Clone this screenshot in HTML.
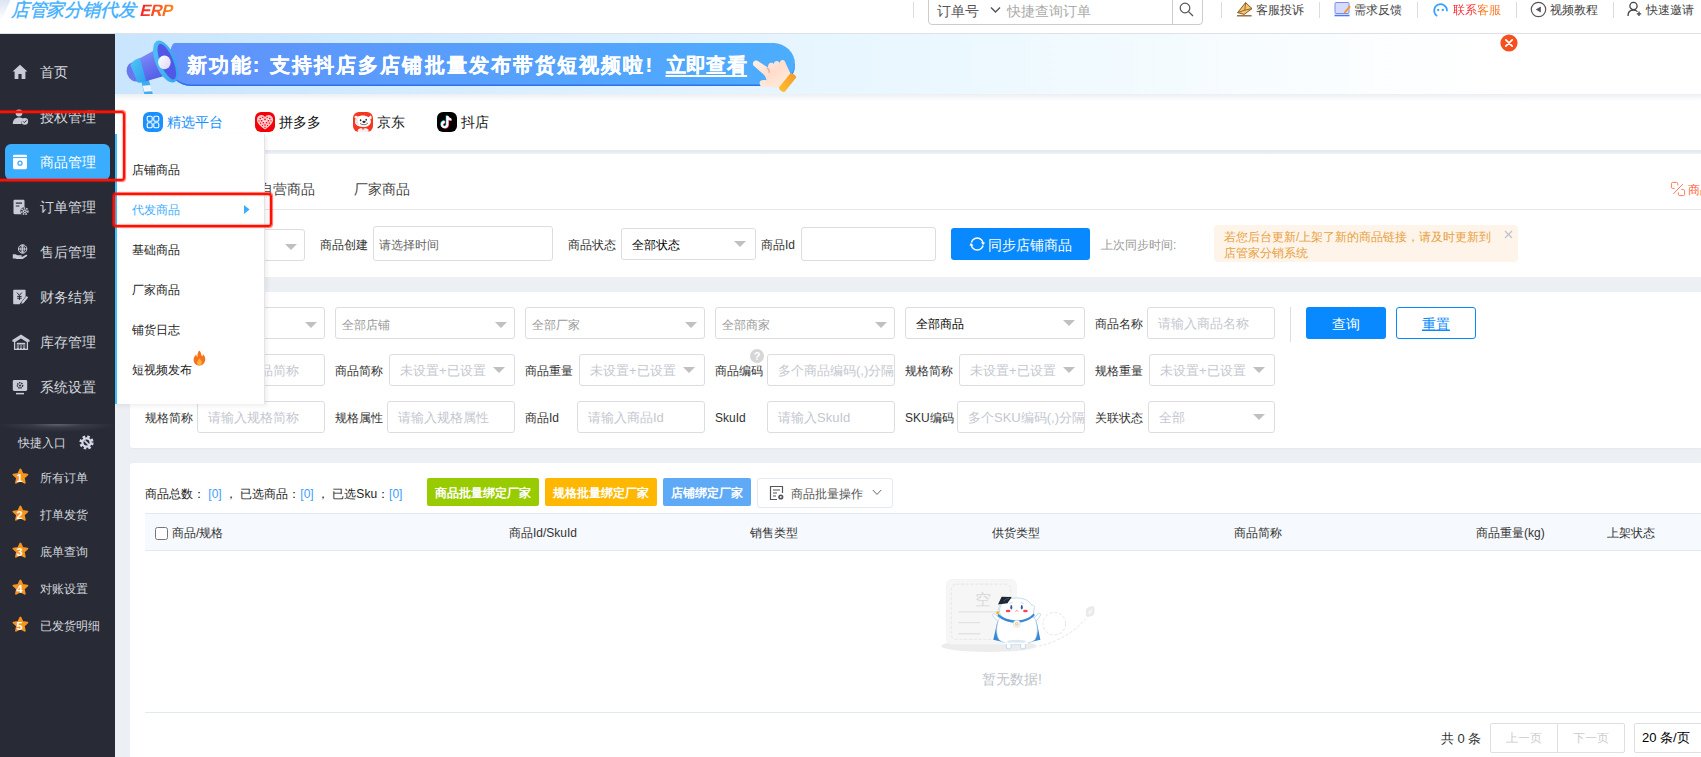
<!DOCTYPE html>
<html lang="zh">
<head>
<meta charset="utf-8">
<title>ERP</title>
<style>
*{box-sizing:border-box;margin:0;padding:0}
html,body{width:1701px;height:757px;overflow:hidden;background:#edf0f5;font-family:"Liberation Sans",sans-serif;font-size:12px;color:#333}
.abs{position:absolute}
#page{position:absolute;left:0;top:0;width:1701px;height:757px;overflow:hidden;background:#ecf0f5}
/* top bar */
#top{position:absolute;left:0;top:0;width:1701px;height:34px;background:#fff;border-bottom:1px solid #dee2e8}
#logo{position:absolute;left:8.5px;top:-3.5px;height:26px;line-height:26px;font-size:18.15px;color:#3daeff;font-weight:300;-webkit-text-stroke:.35px #45b1ff;transform:skewX(-14deg);transform-origin:left bottom;letter-spacing:-0.2px;white-space:nowrap}
#logo b{font-weight:700;font-size:16.5px;margin-left:4px;position:relative;top:0px;-webkit-text-stroke:0;background:linear-gradient(90deg,#f5222d,#fa8c16);-webkit-background-clip:text;background-clip:text;color:transparent;letter-spacing:-.6px}
.tsep{position:absolute;top:2px;width:1px;height:16px;background:#dcdcdc}
.tlink{position:absolute;top:0;height:20px;line-height:20px;font-size:12px;color:#444;white-space:nowrap}
.tico{position:absolute;top:1px}
#search{position:absolute;left:928px;top:-8px;width:275px;height:33px;border:1px solid #ccc;border-radius:4px;background:#fff}
#search .k{position:absolute;left:8px;top:8px;height:20px;line-height:20px;font-size:14px;color:#555}
#search .p{position:absolute;left:78px;top:8px;height:20px;line-height:20px;font-size:14px;color:#aaa}
#search .d{position:absolute;left:243px;top:0;width:1px;height:32px;background:#ccc}
/* sidebar */
#side{position:absolute;left:0;top:34px;width:115px;height:723px;background:#282b35}
.nav{position:absolute;left:0;width:115px;height:36px}
.nav span{position:absolute;left:40px;top:0;height:36px;line-height:36px;font-size:14px;color:#d5d7de;white-space:nowrap}
.nav svg{position:absolute;left:12px;top:10px}
.nav.act{left:5px;width:105px;background:#3aadff;border-radius:6px}
.nav.act span{left:35px;color:#fff}
.nav.act svg{left:7px}
.q{position:absolute;left:0;width:115px;height:24px}
.q span{position:absolute;left:40px;top:0;height:24px;line-height:24px;font-size:12px;color:#d5d7de;white-space:nowrap}
.q svg{position:absolute;left:11.8px;top:2.4px;width:16.8px;height:16.8px}
.q i{position:absolute;left:10.6px;top:2.6px;width:18px;height:18px;line-height:18px;text-align:center;font-style:normal;font-weight:bold;font-size:11px;color:#fff}
/* banner */
#banner{position:absolute;left:115px;top:34px;width:1586px;height:60px;background:linear-gradient(90deg,#c9e6fe 0,#cee9ff 11.7%,#dff1ff 30.6%,#e8f6ff 46%,#eef9ff 56.7%,#f7fcff 71.6%,#fdfeff 82%,#ffffff 88%)}
#pill{position:absolute;left:54px;top:9px;width:626px;height:43px;border-radius:6px 22px 22px 22px/22px 22px 22px 22px;background:linear-gradient(90deg,#6192fc 0,#579ffc 50%,#4cadfd 100%);box-shadow:inset 0 -1.5px 0 #2d72ea}
#pill .t{position:absolute;left:17.5px;top:1px;height:43px;line-height:43px;font-size:20px;font-weight:bold;color:#fff;letter-spacing:2.1px;white-space:nowrap;-webkit-text-stroke:.2px #fff}
#pill .t .m{margin-left:8.3px}
#pill .t u{text-underline-offset:3px;text-decoration-thickness:2px;margin-left:11.2px;letter-spacing:.4px}
#bshadow{position:absolute;left:115px;top:94px;width:1586px;height:7px;background:linear-gradient(180deg,rgba(200,208,220,.35),rgba(255,255,255,0))}
/* platform row */
#plat{position:absolute;left:115px;top:94px;width:1586px;height:56px;background:#fff}
.pf{position:absolute;top:17px;height:22px;line-height:22px;font-size:14px;color:#111;white-space:nowrap}
.pfi{position:absolute;top:18px;width:20px;height:20px;border-radius:6px;overflow:hidden}
#sep1{position:absolute;left:115px;top:150px;width:1586px;height:4px;background:linear-gradient(180deg,#e3e7ee,#eef1f5)}

/* main cards */
.card{position:absolute;background:#fff}
.lb{position:absolute;height:32px;line-height:32px;padding-top:1px;font-size:12px;color:#333;white-space:nowrap}
.ip{position:absolute;height:32px;border:1px solid #dcdde1;border-radius:3px;background:#fff;overflow:hidden;white-space:nowrap}
.ip span{position:absolute;left:10px;top:1px;height:30px;line-height:30px;font-size:13px;color:#c4c7cf;white-space:nowrap}
.ip.s6 span{left:6px;top:2px;font-size:12px;color:#999}
.ip.blk span{color:#000;font-size:12px}
.ip i{position:absolute;right:9px;top:12px;width:0;height:0;border-left:6px solid transparent;border-right:6px solid transparent;border-top:6px solid #c0c0c0}
.ip.s6 i{right:7px;top:14px}
.btn{position:absolute;height:32px;line-height:32px;padding-top:1px;text-align:center;font-size:14px;border-radius:3px;white-space:nowrap}
.cb{position:absolute;top:478px;height:28px;line-height:30px;border-radius:2px;color:#fff;font-size:12px;font-weight:bold;text-align:center;white-space:nowrap}
.th{position:absolute;top:513px;height:38px;line-height:40px;font-size:12px;color:#333;white-space:nowrap}

/* submenu */
#sub{position:absolute;left:115px;top:134px;width:150px;height:270px;background:#fff;border-left:2px solid #3cc0ff;border-right:1px solid #e4e4e4;box-shadow:2px 2px 4px rgba(0,0,0,.07)}
#sub div{position:absolute;left:15px;height:24px;line-height:24px;font-size:12px;color:#222;white-space:nowrap}
.red{position:absolute;border:2px solid #ff1000;border-radius:3.5px;box-shadow:0 0 1px .4px rgba(255,16,0,.6),inset 0 0 1px .4px rgba(255,16,0,.6)}
</style>
</head>
<body>
<div id="page">

<!-- ================= TOP BAR ================= -->
<div id="top">
  <div class="abs" style="left:-6px;top:0;width:12px;height:20px;transform:skewX(-24deg);background:linear-gradient(180deg,rgba(205,218,240,.7),rgba(235,240,250,0))"></div>
  <div id="logo">店管家分销代发<b>ERP</b></div>
  <div class="tsep" style="left:913px"></div>
  <div id="search">
    <span class="k">订单号</span>
    <svg class="abs" style="left:61px;top:13px" width="11" height="8" viewBox="0 0 11 8"><path d="M1 1.5 L5.5 6 L10 1.5" fill="none" stroke="#555" stroke-width="1.4"/></svg>
    <span class="p">快捷查询订单</span>
    <div class="d"></div>
    <svg class="abs" style="left:250px;top:9px" width="15" height="15" viewBox="0 0 15 15"><circle cx="6" cy="6" r="4.8" fill="none" stroke="#555" stroke-width="1.2"/><path d="M9.6 9.6 L14 14" stroke="#555" stroke-width="1.3"/></svg>
  </div>
  <div class="tsep" style="left:1221px"></div>
  <svg class="tico" style="left:1236px" width="18" height="16" viewBox="0 0 18 16"><path d="M1.6 11.6 L9.6 1.6 L16 7.6 L8.2 13.4 Z" fill="#f4c66d" stroke="#8a5a2b" stroke-width="1" stroke-linejoin="round"/><path d="M9.6 1.6 L8.8 9.2 L16 7.6 M8.8 9.2 L1.6 11.6" fill="none" stroke="#8a5a2b" stroke-width=".9"/><path d="M1 14.8 H15.6" stroke="#8a5a2b" stroke-width="1.3"/></svg>
  <div class="tlink" style="left:1256px">客服投诉</div>
  <div class="tsep" style="left:1319px"></div>
  <svg class="tico" style="left:1334px" width="17" height="16" viewBox="0 0 17 16"><rect x="1" y="1.5" width="14" height="11" rx="1" fill="#d6dcff" stroke="#7c8cf0" stroke-width="1"/><path d="M0.5 14.5 H15.5" stroke="#4a7cf0" stroke-width="1.6"/><path d="M9.6 12.6 L10.4 10.6 L15.4 4.6 L16.8 5.8 L11.8 11.8 Z" fill="#f59a23"/></svg>
  <div class="tlink" style="left:1354px">需求反馈</div>
  <div class="tsep" style="left:1417px"></div>
  <svg class="tico" style="left:1432px" width="17" height="16" viewBox="0 0 17 16"><path d="M4.6 14.6 A6.4 6.4 0 1 1 15 9.6" fill="none" stroke="#3aa0ff" stroke-width="1.7" stroke-linecap="round"/><circle cx="6.2" cy="9" r="1.15" fill="#3aa0ff"/><circle cx="10.8" cy="9" r="1.15" fill="#3aa0ff"/></svg>
  <div class="tlink" style="left:1453px;background:linear-gradient(90deg,#f5222d 0,#f5222d 35%,#fa8c16 70%,#fa6a3a 100%);-webkit-background-clip:text;background-clip:text;color:transparent">联系客服</div>
  <div class="tsep" style="left:1516px"></div>
  <svg class="tico" style="left:1530px" width="17" height="17" viewBox="0 0 17 17"><circle cx="8.5" cy="8.5" r="7.2" fill="none" stroke="#555" stroke-width="1.2"/><path d="M10.8 5.6 V11.4 L5.8 8.5 Z" fill="#555"/></svg>
  <div class="tlink" style="left:1550px">视频教程</div>
  <div class="tsep" style="left:1613px"></div>
  <svg class="tico" style="left:1627px" width="15" height="16" viewBox="0 0 15 16"><circle cx="6.5" cy="5" r="3.6" fill="none" stroke="#444" stroke-width="1.3"/><path d="M1 15 C1 10.5 4 9 6.5 9 C8 9 9.5 9.6 10.5 10.6" fill="none" stroke="#444" stroke-width="1.3"/><path d="M12 10.5 V15 M9.8 12.8 H14.2" stroke="#444" stroke-width="1.3"/></svg>
  <div class="tlink" style="left:1646px">快速邀请</div>
</div>

<!-- ================= BANNER ================= -->
<div id="banner">
  <div id="pill"><div class="t"><span>新功能:</span><span class="m">支持抖店多店铺批量发布带货短视频啦!</span><u>立即查看</u></div></div>
  <!-- megaphone -->
  <svg class="abs" style="left:8px;top:4px" width="60" height="56" viewBox="0 0 60 56">
    <defs>
      <linearGradient id="mg1" x1="0" y1="0" x2="0.4" y2="1"><stop offset="0" stop-color="#8a96fa"/><stop offset=".5" stop-color="#6a78f2"/><stop offset="1" stop-color="#5560e6"/></linearGradient>
      <linearGradient id="mg2" x1="0" y1="0" x2="1" y2="1"><stop offset="0" stop-color="#52c4f8"/><stop offset="1" stop-color="#2f9fec"/></linearGradient>
      <linearGradient id="mg3" x1="0" y1="0" x2="1" y2="1"><stop offset="0" stop-color="#ffffff"/><stop offset="1" stop-color="#dcd6fb"/></linearGradient>
    </defs>
    <!-- handle -->
    <path d="M18 42 L25.6 41 L29.8 56 L21.4 56 Z" fill="#3aaeee"/>
    <path d="M19.6 47.8 L27.4 47 L29.2 53.2 L21.2 53.8 Z" fill="#f3f4fb"/>
    <!-- back blob -->
    <ellipse cx="11.5" cy="34" rx="7.6" ry="9.8" transform="rotate(-20 11.5 34)" fill="#6a76ee"/>
    <!-- cone body -->
    <path d="M15.5 21 L31 12.5 L41 38 L22 43.5 Z" fill="url(#mg1)"/>
    <!-- cyan band -->
    <path d="M16.9 20 C12 21 8 24.5 7.6 27.5 L14.6 44.6 C18 45 21.6 44 23 42.6 Z" fill="url(#mg2)"/>
    <!-- rim -->
    <ellipse cx="42.6" cy="23.5" rx="10" ry="22.4" transform="rotate(-22.2 42.6 23.5)" fill="url(#mg2)"/>
    <ellipse cx="43.8" cy="23.8" rx="6.4" ry="19" transform="rotate(-22.2 43.6 23.6)" fill="#5257e8"/>
    <ellipse cx="41.4" cy="24.3" rx="6.3" ry="6.9" fill="url(#mg3)"/>
    <path d="M47.6 23 C49 27 49.6 32 51 38.6 L52.4 36.8 C52 31 50 26 47.6 23 Z" fill="#5257e8"/>
  </svg>
  <!-- hand -->
  <svg class="abs" style="left:634px;top:22px" width="50" height="38" viewBox="0 0 50 38">
    <defs>
      <linearGradient id="hg1" x1="0" y1="0" x2="1" y2="1"><stop offset="0" stop-color="#fff1e8"/><stop offset=".5" stop-color="#ffddcc"/><stop offset="1" stop-color="#fff0e0"/></linearGradient>
      <linearGradient id="hg2" x1="0" y1="1" x2="1" y2="0"><stop offset="0" stop-color="#fcc22c"/><stop offset="1" stop-color="#f7982a"/></linearGradient>
    </defs>
    <!-- thumb -->
    <path d="M10.6 27.4 C10.4 25 12.4 23.8 15 24 L24 24.6 L24 31 L14.6 30.8 C12.4 30.8 10.8 29.6 10.6 27.4 Z" fill="#ffe6d6"/>
    <!-- hand -->
    <path d="M4.4 9.4 C2.6 6.4 5.6 3.4 8.4 4.8 L19 11.4 C19 9.6 19.6 7.4 21.4 6.8 C22.8 6.4 24 7 24.6 8 C25 6.2 26.2 5 27.8 5 C29.4 5 30.4 6 30.8 7.2 C31.2 5 32.4 3.8 33.8 4 C35.4 4.2 36.2 5.6 36.6 7 L41.6 18 L30.4 32 C26 32.4 20.6 31 18.6 27 C17.4 24.4 17 21 15.6 19.4 Z" fill="url(#hg1)"/>
    <path d="M18.4 12.4 C19.6 13 20.6 14.4 20.2 16.2" fill="none" stroke="#f59a8c" stroke-width="1.6" stroke-linecap="round" opacity=".75"/>
    <!-- cuff -->
    <path d="M30 31.6 L41.2 17.6 C44 17.4 47 19.4 47.2 21.4 L35.8 35.8 C33 36.4 30.2 34.4 30 31.6 Z" fill="url(#hg2)"/>
  </svg>
  <!-- close -->
  <svg class="abs" style="left:1385px;top:0px" width="18" height="18" viewBox="0 0 18 18"><circle cx="9" cy="9" r="8.6" fill="#f4511e"/><path d="M5.8 5.8 L12.2 12.2 M12.2 5.8 L5.8 12.2" stroke="#fff" stroke-width="1.7" stroke-linecap="round"/></svg>
</div>

<!-- ================= PLATFORM ROW ================= -->
<div id="plat">
  <div class="pfi" style="left:28px;background:#1890ff">
    <svg width="20" height="20" viewBox="0 0 20 20"><rect x="4.2" y="4.2" width="5" height="5" rx="1.3" fill="none" stroke="#fff" stroke-width="1.1"/><rect x="10.8" y="4.2" width="5" height="5" rx="1.3" fill="none" stroke="#fff" stroke-width="1.1"/><rect x="4.2" y="10.8" width="5" height="5" rx="1.3" fill="none" stroke="#fff" stroke-width="1.1"/><rect x="10.8" y="10.8" width="5" height="5" rx="1.3" fill="none" stroke="#fff" stroke-width="1.1"/></svg>
  </div>
  <div class="pf" style="left:52px;color:#1890ff">精选平台</div>
  <div class="pfi" style="left:140px;background:#f40009">
    <svg width="20" height="20" viewBox="0 0 20 20"><path d="M10 17.4 C5 14 1.8 11 1.9 7.4 C2 4.4 4.4 2.8 6.6 2.9 C8 3 9.2 3.7 10 4.9 C10.8 3.7 12 3 13.4 2.9 C15.6 2.8 18 4.4 18.1 7.4 C18.2 11 15 14 10 17.4 Z" fill="#fbc4c7"/><g fill="#f40009"><circle cx="5.2" cy="6.4" r=".75"/><circle cx="7.8" cy="5.4" r=".6"/><circle cx="12.2" cy="5.4" r=".6"/><circle cx="14.8" cy="6.4" r=".75"/><circle cx="10" cy="7.4" r=".8"/><circle cx="4" cy="8.8" r=".6"/><circle cx="6.6" cy="8.8" r=".8"/><circle cx="13.4" cy="8.8" r=".8"/><circle cx="16" cy="8.8" r=".6"/><circle cx="8.4" cy="10.8" r=".8"/><circle cx="11.6" cy="10.8" r=".8"/><circle cx="5.6" cy="11.2" r=".6"/><circle cx="14.4" cy="11.2" r=".6"/><circle cx="10" cy="13" r=".8"/><circle cx="7.4" cy="13.4" r=".55"/><circle cx="12.6" cy="13.4" r=".55"/><circle cx="10" cy="15.4" r=".55"/></g><g fill="#fff"><circle cx="6.4" cy="7.4" r=".5"/><circle cx="13.6" cy="7.4" r=".5"/><circle cx="10" cy="9.6" r=".55"/><circle cx="8" cy="12.4" r=".45"/><circle cx="12" cy="12.4" r=".45"/><circle cx="3.4" cy="7.2" r=".45"/><circle cx="16.6" cy="7.2" r=".45"/><circle cx="10" cy="5.8" r=".4"/></g></svg>
  </div>
  <div class="pf" style="left:164px">拼多多</div>
  <div class="pfi" style="left:238px;background:#f6361f">
    <svg width="20" height="20" viewBox="0 0 20 20"><path d="M1.4 5.2 C1.6 3.6 3.4 3.2 4.8 4.4 L3.4 7.2 Z" fill="#f4f4f4"/><path d="M17.4 3.6 C18.8 4 19 6 18 7.6 L15.4 5.4 Z" fill="#fff"/><path d="M2 9.6 C2 5.6 5.6 3.6 9.8 3.6 C14.2 3.6 17.6 5.8 17.8 9.2 C18 12.8 14.6 15 10 15 C5.2 15 2 13 2 9.6 Z" fill="#fff"/><path d="M2 9.6 C2 7.4 3.2 5.6 5 4.6 C4.2 7 4.4 11 6.4 14.2 C3.6 13.4 2 11.8 2 9.6 Z" fill="#e4e4e4"/><ellipse cx="7.6" cy="8.2" rx=".8" ry="1" fill="#222"/><ellipse cx="13.2" cy="7.8" rx=".8" ry="1" fill="#222"/><ellipse cx="11" cy="9.8" rx="1.7" ry="1.1" fill="#222"/><path d="M7 11.2 C9 13.4 13 13.2 15 10.8" fill="none" stroke="#333" stroke-width=".7"/><path d="M5 17.4 C8 15.6 12.6 15.6 15.4 17.4 L15.8 20 L4.6 20 Z" fill="#f1f1f1"/><path d="M8.4 16.2 L11.8 16.2 L11 17.6 L9.2 17.6 Z" fill="#f6361f"/></svg>
  </div>
  <div class="pf" style="left:262px">京东</div>
  <div class="pfi" style="left:322px;background:#000">
    <svg width="20" height="20" viewBox="0 0 20 20"><g fill="none" stroke-width="2.1" stroke-linecap="butt"><path d="M10.4 4 V12.6 A2.7 2.7 0 1 1 7.8 9.9 M10.4 4.2 C10.8 6.3 12.3 7.4 14.3 7.5" stroke="#25f4ee" transform="translate(-.6,-.5)"/><path d="M10.4 4 V12.6 A2.7 2.7 0 1 1 7.8 9.9 M10.4 4.2 C10.8 6.3 12.3 7.4 14.3 7.5" stroke="#fe2c55" transform="translate(.6,.5)"/><path d="M10.4 4 V12.6 A2.7 2.7 0 1 1 7.8 9.9 M10.4 4.2 C10.8 6.3 12.3 7.4 14.3 7.5" stroke="#fff"/></g></svg>
  </div>
  <div class="pf" style="left:346px">抖店</div>
</div>
<div id="bshadow"></div>
<div id="sep1"></div>


<!-- ================= CARD 1 : tabs + sync row ================= -->
<div class="card" style="left:130px;top:154px;width:1571px;height:123px"></div>
<div class="abs" style="left:130px;top:209px;width:1571px;height:1px;background:#e6e8eb"></div>
<div class="abs" style="left:259px;top:178px;height:22px;line-height:22px;font-size:14px;color:#444">自营商品</div>
<div class="abs" style="left:354px;top:178px;height:22px;line-height:22px;font-size:14px;color:#444">厂家商品</div>
<svg class="abs" style="left:1670px;top:181px" width="16" height="16" viewBox="0 0 16 16"><g fill="none" stroke="#ff7a5c" stroke-width="1"><path d="M4.6 7.4 H2.6 C1.9 7.4 1.4 6.9 1.4 6.2 V2.6 C1.4 1.9 1.9 1.4 2.6 1.4 H6.6 C7.3 1.4 7.8 1.9 7.8 2.6 V4.4"/><path d="M11.4 8.6 H13.4 C14.1 8.6 14.6 9.1 14.6 9.8 V13.4 C14.6 14.1 14.1 14.6 13.4 14.6 H9.6 C8.9 14.6 8.4 14.1 8.4 13.4 V11.4"/><path d="M12.8 3.2 L3.4 12.8"/></g></svg>
<div class="abs" style="left:1688px;top:179px;height:22px;line-height:22px;font-size:12px;color:#ff5f3c;white-space:nowrap">商品</div>

<div class="ip" style="left:145px;top:229px;width:160px"><i style="right:7px;top:14px"></i></div>
<div class="lb" style="left:320px;top:228px">商品创建</div>
<div class="ip s6" style="left:373px;top:226px;width:180px;height:35px"><span style="color:#666;height:33px;line-height:33px;left:5px;top:2px">请选择时间</span></div>
<div class="lb" style="left:568px;top:228px">商品状态</div>
<div class="ip blk" style="left:621px;top:228px;width:135px"><span>全部状态</span><i></i></div>
<div class="lb" style="left:761px;top:228px">商品Id</div>
<div class="ip" style="left:801px;top:227px;width:135px;height:34px"></div>
<div class="btn" style="left:951px;top:228px;width:139px;background:#0889ff;color:#fff;text-align:left;padding-left:37px">同步店铺商品
  <svg class="abs" style="left:18px;top:8px" width="16" height="16" viewBox="0 0 16 16"><circle cx="8.2" cy="8" r="6" fill="none" stroke="#fff" stroke-width="1.5"/><path d="M12 6.2 L16 6.4 L14.2 9.6 Z M4.4 9.8 L.4 9.6 L2.2 6.4 Z" fill="#fff"/><path d="M13.2 8.8 L15.2 9.2 M3.2 7.2 L1.2 6.8" stroke="#0889ff" stroke-width="1"/></svg>
</div>
<div class="lb" style="left:1101px;top:228px;color:#999">上次同步时间:</div>
<div class="abs" style="left:1214px;top:225px;width:304px;height:37px;background:#fef4ea;border-radius:4px"></div>
<div class="abs" style="left:1224px;top:229px;width:280px;line-height:16px;font-size:12px;color:#e8a03c">若您后台更新/上架了新的商品链接，请及时更新到<br>店管家分销系统</div>
<svg class="abs" style="left:1504px;top:230px" width="9" height="9" viewBox="0 0 9 9"><path d="M1 1 L8 8 M8 1 L1 8" stroke="#bcc0c8" stroke-width="1.1"/></svg>

<!-- ================= CARD 2 : filters ================= -->
<div class="card" style="left:130px;top:292px;width:1571px;height:156px;border-radius:3px 0 0 3px;box-shadow:0 1px 2px rgba(0,0,0,.035)"></div>
<!-- row 2 -->
<div class="ip s6" style="left:145px;top:307px;width:180px"><span>全部平台</span><i></i></div>
<div class="ip s6" style="left:335px;top:307px;width:180px"><span>全部店铺</span><i></i></div>
<div class="ip s6" style="left:525px;top:307px;width:180px"><span>全部厂家</span><i></i></div>
<div class="ip s6" style="left:715px;top:307px;width:180px"><span>全部商家</span><i></i></div>
<div class="ip blk" style="left:905px;top:307px;width:180px"><span>全部商品</span><i></i></div>
<div class="lb" style="left:1095px;top:307px">商品名称</div>
<div class="ip" style="left:1147px;top:307px;width:128px"><span>请输入商品名称</span></div>
<div class="abs" style="left:1290px;top:307px;width:1px;height:35px;background:#dcdfe6"></div>
<div class="btn" style="left:1306px;top:307px;width:80px;background:#0889ff;color:#fff">查询</div>
<div class="btn" style="left:1396px;top:307px;width:80px;background:#fff;color:#0889ff;border:1px solid #0889ff;line-height:30px;text-decoration:underline">重置</div>
<!-- row 3 -->
<div class="lb" style="left:145px;top:354px">商品简称</div>
<div class="ip" style="left:197px;top:354px;width:128px"><span>请输入商品简称</span></div>
<div class="lb" style="left:335px;top:354px">商品简称</div>
<div class="ip" style="left:389px;top:354px;width:126px"><span>未设置+已设置</span><i></i></div>
<div class="lb" style="left:525px;top:354px">商品重量</div>
<div class="ip" style="left:579px;top:354px;width:126px"><span>未设置+已设置</span><i></i></div>
<div class="lb" style="left:715px;top:354px">商品编码</div>
<div class="abs" style="left:750px;top:349px;width:14px;height:14px;border-radius:7px;background:#d6d6d6;color:#fff;font-size:11px;line-height:14px;text-align:center;font-weight:bold">?</div>
<div class="ip" style="left:767px;top:354px;width:128px"><span>多个商品编码(,)分隔</span></div>
<div class="lb" style="left:905px;top:354px">规格简称</div>
<div class="ip" style="left:959px;top:354px;width:126px"><span>未设置+已设置</span><i></i></div>
<div class="lb" style="left:1095px;top:354px">规格重量</div>
<div class="ip" style="left:1149px;top:354px;width:126px"><span>未设置+已设置</span><i></i></div>
<!-- row 4 -->
<div class="lb" style="left:145px;top:401px">规格简称</div>
<div class="ip" style="left:197px;top:401px;width:128px"><span>请输入规格简称</span></div>
<div class="lb" style="left:335px;top:401px">规格属性</div>
<div class="ip" style="left:387px;top:401px;width:128px"><span>请输入规格属性</span></div>
<div class="lb" style="left:525px;top:401px">商品Id</div>
<div class="ip" style="left:577px;top:401px;width:128px"><span>请输入商品Id</span></div>
<div class="lb" style="left:715px;top:401px">SkuId</div>
<div class="ip" style="left:767px;top:401px;width:128px"><span>请输入SkuId</span></div>
<div class="lb" style="left:905px;top:401px">SKU编码</div>
<div class="ip" style="left:957px;top:401px;width:128px"><span>多个SKU编码(,)分隔</span></div>
<div class="lb" style="left:1095px;top:401px">关联状态</div>
<div class="ip" style="left:1148px;top:401px;width:127px"><span>全部</span><i></i></div>

<!-- ================= CARD 3 : table ================= -->
<div class="card" style="left:130px;top:463px;width:1571px;height:300px;border-radius:3px 0 0 0"></div>
<div class="abs" style="left:145px;top:482px;height:24px;line-height:24px;font-size:12px;color:#222;white-space:nowrap">商品总数：&nbsp;<span style="color:#409eff">[0]</span>&nbsp;，&nbsp;已选商品：<span style="color:#409eff">[0]</span>&nbsp;，&nbsp;已选Sku：<span style="color:#409eff">[0]</span></div>
<div class="cb" style="left:427px;width:112px;background:#99cc00">商品批量绑定厂家</div>
<div class="cb" style="left:545px;width:112px;background:#ffb700">规格批量绑定厂家</div>
<div class="cb" style="left:663px;width:88px;background:#5eaaf7">店铺绑定厂家</div>
<div class="abs" style="left:757px;top:478px;width:136px;height:30px;border:1px solid #e3e8f1;border-radius:3px;background:#fff"></div>
<svg class="abs" style="left:769px;top:485px" width="16" height="16" viewBox="0 0 16 16"><g fill="none" stroke="#555" stroke-width="1.2"><path d="M8 14.5 H1.5 V1.5 H13.5 V8"/><path d="M4 5 H11 M4 8 H8 M4 11 H7"/></g><circle cx="11.8" cy="12" r="2.6" fill="#555"/><circle cx="11.8" cy="12" r="0.9" fill="#fff"/></svg>
<div class="abs" style="left:791px;top:478px;height:30px;line-height:32px;font-size:12px;color:#555;white-space:nowrap">商品批量操作</div>
<svg class="abs" style="left:872px;top:489px" width="10" height="7" viewBox="0 0 10 7"><path d="M0.8 1 L5 5.4 L9.2 1" fill="none" stroke="#666" stroke-width="1"/></svg>

<div class="abs" style="left:145px;top:513px;width:1556px;height:38px;background:#f6f9fd;border-top:1px solid #e3e9f1;border-bottom:1px solid #e3e9f1"></div>
<div class="abs" style="left:155px;top:527px;width:13px;height:13px;border:1px solid #767676;border-radius:2.5px;background:#fff"></div>
<div class="th" style="left:172px">商品/规格</div>
<div class="th" style="left:509px">商品Id/SkuId</div>
<div class="th" style="left:750px">销售类型</div>
<div class="th" style="left:992px">供货类型</div>
<div class="th" style="left:1234px">商品简称</div>
<div class="th" style="left:1476px">商品重量(kg)</div>
<div class="th" style="left:1607px">上架状态</div>

<!-- empty state -->
<svg class="abs" style="left:936px;top:572px" width="170" height="90" viewBox="0 0 170 90">
  <ellipse cx="53" cy="74" rx="48" ry="6" fill="#ececec"/>
  <rect x="10.3" y="7.5" width="70" height="65" rx="5.5" fill="#f6f6f6" stroke="#f0f0f0" stroke-width=".6"/>
  <rect x="15.2" y="12.2" width="59.6" height="55.2" rx="5" fill="none" stroke="#dcdcdc" stroke-width=".6" stroke-dasharray="3 1.8"/>
  <text x="47.2" y="32.6" font-size="16" fill="#d9d9d9" text-anchor="middle" font-family="Liberation Sans, sans-serif">空</text>
  <path d="M22.2 39.9 H66 M22.2 50.6 H44.2 M22.2 61.7 H44.2" stroke="#e3e3e3" stroke-width="1.4"/>
  <!-- cape -->
  <path d="M61.5 49 L57.3 67.8 L67 70 Z" fill="#3689d2"/>
  <path d="M100.5 49 L104.4 67.8 L95 70 Z" fill="#3689d2"/>
  <!-- arms -->
  <path d="M66.5 52 C62 50 58.5 46.5 56.6 43.2 C56.2 41.6 58.6 41.2 59.4 42.6 C61.4 45 64.5 46.4 67.5 47 Z" fill="#fff" stroke="#a9cbe8" stroke-width=".7"/>
  <path d="M95.5 52 C100 50 103 46.5 104.6 42.8 C105 41.2 102.6 40.8 101.8 42.2 C100 44.8 97 46.2 94.5 47 Z" fill="#fff" stroke="#a9cbe8" stroke-width=".7"/>
  <!-- body -->
  <path d="M64 45 C60 52 59.5 62 63 67.5 C67 73.5 95 73.5 99 67.5 C102.5 62 102 52 98 45 Z" fill="#fff" stroke="#a9cbe8" stroke-width=".7"/>
  <ellipse cx="80.5" cy="69.6" rx="9.5" ry="1.9" fill="#dbe8f3"/>
  <!-- feet -->
  <ellipse cx="72.7" cy="74" rx="2.6" ry="3" fill="#fff" stroke="#a9cbe8" stroke-width=".7"/>
  <ellipse cx="87" cy="74" rx="2.6" ry="3" fill="#fff" stroke="#a9cbe8" stroke-width=".7"/>
  <path d="M68 70.6 H92 V72 H68 Z" fill="#fff"/>
  <!-- head -->
  <path d="M63.6 40 C63 31 70 26 80.5 26 C88 26 93 28.5 95.5 33 C96.5 32.6 97.6 33.4 98.6 34.6 C98.2 36.2 98 37.6 97.8 40 C97.6 45 90 48.6 80.8 48.6 C71 48.6 64 45 63.6 40 Z" fill="#fff" stroke="#a9cbe8" stroke-width=".7"/>
  <!-- scarf -->
  <path d="M62 41.6 C67 46.4 74 48.6 81 48.4 C88 48.2 94 45.8 98 41.2 L98.6 43.6 C94 48.4 88 50.6 81 50.8 C73 51 66.5 48.6 61.6 44 Z" fill="#3689d2"/>
  <!-- face -->
  <ellipse cx="75.3" cy="35.2" rx="1" ry="2.2" fill="#2b5d9b"/><ellipse cx="85.8" cy="35.2" rx="1" ry="2.2" fill="#2b5d9b"/>
  <path d="M73.4 31.6 L76.4 30.4 M84.8 30.4 L87.8 31.6" stroke="#9bbfe0" stroke-width=".6"/>
  <ellipse cx="72.1" cy="39" rx="2.4" ry="1.3" fill="#ff4058"/><ellipse cx="89.4" cy="39" rx="2.4" ry="1.3" fill="#ff4058"/>
  <path d="M79.4 39.8 L80.8 38 L82.2 39.8" fill="none" stroke="#ff6b81" stroke-width=".7"/>
  <!-- hat -->
  <path d="M65.6 24.8 L75.7 25.1 L71.5 31.3 L62 32.5 Z" fill="#1f2733"/>
  <path d="M67.5 29.5 C69 27.5 71 26.6 73 26.6" fill="none" stroke="#3d6d9e" stroke-width=".7"/>
  <path d="M63.8 32.6 L61.6 40" stroke="#cfe0ef" stroke-width="1"/><rect x="60.4" y="39.4" width="2.4" height="2.6" fill="#f5b800" transform="rotate(15 61.6 40.7)"/>
  <!-- medal -->
  <circle cx="80.8" cy="51.8" r="3.5" fill="#fff" stroke="#b9d3ea" stroke-width=".6"/><circle cx="80.8" cy="51.8" r="1.9" fill="#fbc27a"/><circle cx="80.8" cy="51.8" r=".8" fill="#fff"/>
  <!-- deco -->
  <circle cx="118.3" cy="51.7" r="11.3" fill="none" stroke="#dedede" stroke-width=".8" stroke-dasharray="3 1.8"/>
  <path d="M103 74 C118 71 137 62 149.4 46.8" fill="none" stroke="#dedede" stroke-width=".8" stroke-dasharray="3 1.8"/>
  <path d="M150.6 37.6 C151.5 35.8 155 34.4 157.6 34.6 C158.6 36.6 158.2 41 157 42.8 C155 44.2 152 44.6 150.4 44 Z" fill="#ebebeb" stroke="#e0e0e0" stroke-width=".6"/>
  <path d="M152.4 40.2 L156.2 38.4 M153.2 42.2 L154.6 39.2" stroke="#fff" stroke-width=".9"/>
</svg>
<div class="abs" style="left:982px;top:668px;height:22px;line-height:22px;font-size:14px;color:#c0c4cc;white-space:nowrap">暂无数据!</div>
<div class="abs" style="left:145px;top:712px;width:1556px;height:1px;background:#e3e9f1"></div>

<!-- pagination -->
<div class="abs" style="left:1441px;top:724px;height:30px;line-height:30px;font-size:13px;color:#333;white-space:nowrap">共 0 条</div>
<div class="abs" style="left:1490px;top:723px;width:135px;height:30px;border:1px solid #dfdfdf;border-radius:2px;background:#fff"></div>
<div class="abs" style="left:1557px;top:723px;width:1px;height:30px;background:#dfdfdf"></div>
<div class="abs" style="left:1490px;top:723px;width:68px;height:30px;line-height:30px;text-align:center;font-size:12px;color:#ccc">上一页</div>
<div class="abs" style="left:1557px;top:723px;width:68px;height:30px;line-height:30px;text-align:center;font-size:12px;color:#ccc">下一页</div>
<div class="abs" style="left:1634px;top:723px;width:80px;height:30px;border:1px solid #dfdfdf;border-radius:2px;background:#fff"></div>
<div class="abs" style="left:1642px;top:723px;height:30px;line-height:30px;font-size:13px;color:#000;white-space:nowrap">20 条/页</div>




<!-- ================= SIDEBAR ================= -->
<div id="side">
  <div class="nav" style="top:20px"><svg width="16" height="16" viewBox="0 0 16 16"><path d="M8 0.8 L15.4 7.6 H13.4 V15 H9.6 V10 H6.4 V15 H2.6 V7.6 H0.6 Z" fill="#c9ccd6"/></svg><span>首页</span></div>
  <div class="nav" style="top:65px"><svg width="17" height="16" viewBox="0 0 17 16"><circle cx="7" cy="4" r="3.4" fill="#c9ccd6"/><path d="M0.8 15 C0.8 10.5 3.5 8.4 7 8.4 C9 8.4 10.6 9 11.6 10.2 C9.6 11 9 13 9.6 15 Z" fill="#c9ccd6"/><circle cx="12.8" cy="12.4" r="3.3" fill="#c9ccd6"/><path d="M11.2 12.4 L12.4 13.6 L14.4 11.4" fill="none" stroke="#282a36" stroke-width="1"/></svg><span>授权管理</span></div>
  <div class="nav act" style="top:110px"><svg width="16" height="16" viewBox="0 0 16 16"><path d="M1 2.2 C1 1.4 1.6 .8 2.4 .8 H13.6 C14.4 .8 15 1.4 15 2.2 V13.8 C15 14.6 14.4 15.2 13.6 15.2 H2.4 C1.6 15.2 1 14.6 1 13.8 Z" fill="#fff"/><path d="M1 3.6 H15" stroke="#3daeff" stroke-width="1"/><circle cx="8" cy="9.2" r="2" fill="none" stroke="#3daeff" stroke-width="1.3"/></svg><span>商品管理</span></div>
  <div class="nav" style="top:155px"><svg width="17" height="16" viewBox="0 0 17 16"><path d="M1.5 2 C1.5 1.3 2 .8 2.7 .8 H11.3 C12 .8 12.5 1.3 12.5 2 V8.2 C10 8.2 8.4 10 8.4 12 C8.4 13.3 9 14.4 9.8 15.2 H2.7 C2 15.2 1.5 14.7 1.5 14 Z" fill="#c9ccd6"/><path d="M3.8 4.2 H10 M3.8 7 H7.4" stroke="#282a36" stroke-width="1.2"/><circle cx="12.8" cy="12.2" r="3.1" fill="none" stroke="#c9ccd6" stroke-width="1.5" stroke-dasharray="1.6 1"/><circle cx="12.8" cy="12.2" r="1.9" fill="#c9ccd6"/><circle cx="12.8" cy="12.2" r=".8" fill="#282a36"/></svg><span>订单管理</span></div>
  <div class="nav" style="top:200px"><svg width="17" height="16" viewBox="0 0 17 16"><g fill="none" stroke="#c9ccd6" stroke-width="1"><circle cx="10.6" cy="5" r="4.2"/><path d="M6.4 5 H14.8 M10.6 .8 V9.2 M10.6 .8 C8.2 3 8.2 7 10.6 9.2 M10.6 .8 C13 3 13 7 10.6 9.2"/></g><path d="M.8 10.2 H3.4 L5.6 11.2 H9 C10 11.2 10 12.6 9 12.6 H6.6 L10.4 12.8 L14 10.8 C15 10.4 15.8 11.6 14.8 12.2 L10.6 15 H4.6 L3.4 14.4 H.8 Z" fill="#c9ccd6"/></svg><span>售后管理</span></div>
  <div class="nav" style="top:245px"><svg width="17" height="16" viewBox="0 0 17 16"><path d="M1.2 1.8 C1.2 1.2 1.7 .8 2.2 .8 H12.6 C13.2 .8 13.6 1.2 13.6 1.8 V7.4 L8 14.4 L7.8 15.2 H2.2 C1.7 15.2 1.2 14.8 1.2 14.2 Z" fill="#c9ccd6"/><path d="M5 3.6 L7.4 6.4 L9.8 3.6 M7.4 6.4 V11 M5.2 7.4 H9.6 M5.2 9.2 H9.6" fill="none" stroke="#282a36" stroke-width="1"/><path d="M9.4 15 L10 12.6 L14.6 7 L16.2 8.4 L11.6 14 Z" fill="#c9ccd6"/></svg><span>财务结算</span></div>
  <div class="nav" style="top:290px"><svg width="18" height="16" viewBox="0 0 18 16"><path d="M9 .4 L17.6 6 V7.8 H16 L9 3.2 L2 7.8 H.4 V6 Z" fill="#c9ccd6"/><path d="M2.6 7.6 L9 3.6 L15.4 7.6 V15.4 H2.6 Z" fill="none" stroke="#c9ccd6" stroke-width="1.3"/><path d="M4.8 15 V8.8 H13.2 V15 Z" fill="#c9ccd6"/><path d="M4.8 11 H13.2 M4.8 13 H13.2 M7.6 11 V15 M10.4 11 V15" stroke="#282a36" stroke-width=".9"/></svg><span>库存管理</span></div>
  <div class="nav" style="top:335px"><svg width="16" height="16" viewBox="0 0 16 16"><rect x=".8" y="1" width="14.4" height="11" rx="1.4" fill="#c9ccd6"/><circle cx="8" cy="6.4" r="2.6" fill="none" stroke="#282a36" stroke-width="1.4" stroke-dasharray="1.4 .8"/><circle cx="8" cy="6.4" r="1" fill="#282a36"/><path d="M4 14.6 H12" stroke="#c9ccd6" stroke-width="1.5"/></svg><span>系统设置</span></div>

  <div class="abs" style="left:0;top:390px;width:115px;height:8px;background:radial-gradient(ellipse 52% 100% at 50% 0,rgba(140,144,160,.55) 0,rgba(95,99,115,.3) 45%,rgba(40,42,54,0) 100%)"></div>
  <div class="abs" style="left:18px;top:397px;height:24px;line-height:24px;font-size:12px;color:#d5d7de;white-space:nowrap">快捷入口</div>
  <svg class="abs" style="left:78px;top:400px" width="17" height="17" viewBox="0 0 17 17"><g fill="none" stroke="#d5d8e6"><circle cx="8.5" cy="8.5" r="5.6" stroke-width="3" stroke-dasharray="2.4 2"/><circle cx="8.5" cy="8.5" r="4.1" stroke-width="2.2"/><path d="M6.4 6.4 L11.6 11.6" stroke-width="1.6"/></g></svg>

  <div class="q" style="top:432px"><svg width="18" height="18" viewBox="0 0 18 18"><path d="M9 .8 L11.5 6.1 L17.3 6.8 L13 10.8 L14.2 16.6 L9 13.7 L3.8 16.6 L5 10.8 L.7 6.8 L6.5 6.1 Z" fill="#f7941d" stroke="#f7941d" stroke-width="2.2" stroke-linejoin="round" transform="translate(9 9) scale(.9) translate(-9 -9)"/></svg><i>1</i><span>所有订单</span></div>
  <div class="q" style="top:469px"><svg width="18" height="18" viewBox="0 0 18 18"><path d="M9 .8 L11.5 6.1 L17.3 6.8 L13 10.8 L14.2 16.6 L9 13.7 L3.8 16.6 L5 10.8 L.7 6.8 L6.5 6.1 Z" fill="#f7941d" stroke="#f7941d" stroke-width="2.2" stroke-linejoin="round" transform="translate(9 9) scale(.9) translate(-9 -9)"/></svg><i>2</i><span>打单发货</span></div>
  <div class="q" style="top:506px"><svg width="18" height="18" viewBox="0 0 18 18"><path d="M9 .8 L11.5 6.1 L17.3 6.8 L13 10.8 L14.2 16.6 L9 13.7 L3.8 16.6 L5 10.8 L.7 6.8 L6.5 6.1 Z" fill="#f7941d" stroke="#f7941d" stroke-width="2.2" stroke-linejoin="round" transform="translate(9 9) scale(.9) translate(-9 -9)"/></svg><i>3</i><span>底单查询</span></div>
  <div class="q" style="top:543px"><svg width="18" height="18" viewBox="0 0 18 18"><path d="M9 .8 L11.5 6.1 L17.3 6.8 L13 10.8 L14.2 16.6 L9 13.7 L3.8 16.6 L5 10.8 L.7 6.8 L6.5 6.1 Z" fill="#f7941d" stroke="#f7941d" stroke-width="2.2" stroke-linejoin="round" transform="translate(9 9) scale(.9) translate(-9 -9)"/></svg><i>4</i><span>对账设置</span></div>
  <div class="q" style="top:580px"><svg width="18" height="18" viewBox="0 0 18 18"><path d="M9 .8 L11.5 6.1 L17.3 6.8 L13 10.8 L14.2 16.6 L9 13.7 L3.8 16.6 L5 10.8 L.7 6.8 L6.5 6.1 Z" fill="#f7941d" stroke="#f7941d" stroke-width="2.2" stroke-linejoin="round" transform="translate(9 9) scale(.9) translate(-9 -9)"/></svg><i>5</i><span>已发货明细</span></div>
</div>




<!-- ================= SUBMENU + HIGHLIGHTS ================= -->
<div id="sub">
  <div style="top:24px">店铺商品</div>
  <div style="top:64px;color:#3daeff">代发商品</div>
  <svg class="abs" style="left:127px;top:71px" width="6" height="9" viewBox="0 0 6 9"><path d="M0 0 L5.6 4.5 L0 9 Z" fill="#3daeff"/></svg>
  <div style="top:104px">基础商品</div>
  <div style="top:144px">厂家商品</div>
  <div style="top:184px">铺货日志</div>
  <div style="top:224px">短视频发布</div>
  <svg class="abs" style="left:76px;top:216px" width="13" height="16" viewBox="0 0 13 16"><path d="M6.2 .4 C9 3 7.6 5 9.4 6.2 C10 5.4 10 4.6 9.8 4 C12 6 12.6 8.4 12.2 10.6 C11.6 13.6 9.2 15.6 6.4 15.6 C3.4 15.6 .8 13.4 .6 10.2 C.4 7.6 2 5.8 3.4 4.6 C3.4 5.8 3.8 6.6 4.6 7 C4.2 4.4 4.8 2 6.2 .4 Z" fill="#f5731b"/><path d="M6.4 8.4 C8 10 9.2 11.2 8.8 13 C8.4 14.6 7.4 15.4 6.4 15.4 C5.2 15.4 4.2 14.6 4 13.2 C3.8 11.4 5.4 10.4 6.4 8.4 Z" fill="#fbb040"/></svg>
</div>
<div class="red" style="left:-6px;top:111px;width:131px;height:70px"></div>
<div class="red" style="left:113px;top:193px;width:159px;height:34px"></div>



</div>
</body>
</html>
